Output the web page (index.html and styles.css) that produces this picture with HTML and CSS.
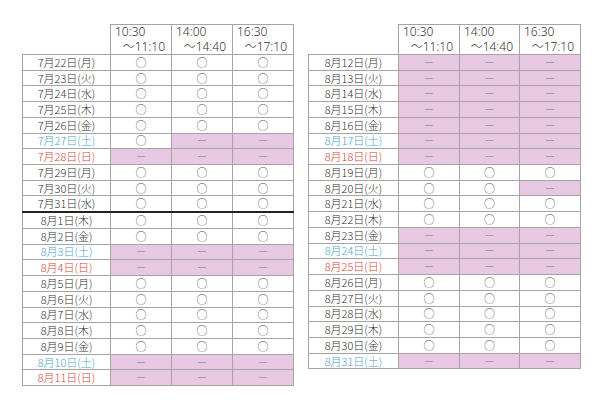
FILE: index.html
```html
<!DOCTYPE html>
<html lang="ja">
<head>
<meta charset="utf-8">
<link rel="stylesheet" href="styles.css">
</head>
<body>
<div class="page">
<table class="sched left">
<colgroup><col class="c-date"><col class="c-t"><col class="c-t"><col class="c-t"></colgroup>
<tr class="head"><th class="corner"></th><th><span class="l1">10:30</span><span class="l2">～11:10</span></th><th><span class="l1">14:00</span><span class="l2">～14:40</span></th><th><span class="l1">16:30</span><span class="l2">～17:10</span></th></tr>
<tr><td class="d">7月22日(月)</td><td>○</td><td>○</td><td>○</td></tr>
<tr><td class="d">7月23日(火)</td><td>○</td><td>○</td><td>○</td></tr>
<tr><td class="d">7月24日(水)</td><td>○</td><td>○</td><td>○</td></tr>
<tr><td class="d">7月25日(木)</td><td>○</td><td>○</td><td>○</td></tr>
<tr><td class="d">7月26日(金)</td><td>○</td><td>○</td><td>○</td></tr>
<tr><td class="d sat">7月27日(土)</td><td>○</td><td class="no">－</td><td class="no">－</td></tr>
<tr><td class="d sun">7月28日(日)</td><td class="no">－</td><td class="no">－</td><td class="no">－</td></tr>
<tr><td class="d">7月29日(月)</td><td>○</td><td>○</td><td>○</td></tr>
<tr><td class="d">7月30日(火)</td><td>○</td><td>○</td><td>○</td></tr>
<tr><td class="d">7月31日(水)</td><td>○</td><td>○</td><td>○</td></tr>
<tr class="split"><td class="d">8月1日(木)</td><td>○</td><td>○</td><td>○</td></tr>
<tr><td class="d">8月2日(金)</td><td>○</td><td>○</td><td>○</td></tr>
<tr><td class="d sat">8月3日(土)</td><td class="no">－</td><td class="no">－</td><td class="no">－</td></tr>
<tr><td class="d sun">8月4日(日)</td><td class="no">－</td><td class="no">－</td><td class="no">－</td></tr>
<tr><td class="d">8月5日(月)</td><td>○</td><td>○</td><td>○</td></tr>
<tr><td class="d">8月6日(火)</td><td>○</td><td>○</td><td>○</td></tr>
<tr><td class="d">8月7日(水)</td><td>○</td><td>○</td><td>○</td></tr>
<tr><td class="d">8月8日(木)</td><td>○</td><td>○</td><td>○</td></tr>
<tr><td class="d">8月9日(金)</td><td>○</td><td>○</td><td>○</td></tr>
<tr><td class="d sat">8月10日(土)</td><td class="no">－</td><td class="no">－</td><td class="no">－</td></tr>
<tr><td class="d sun">8月11日(日)</td><td class="no">－</td><td class="no">－</td><td class="no">－</td></tr>
</table>

<table class="sched right">
<colgroup><col class="c-date2"><col class="c-t"><col class="c-t2"><col class="c-t"></colgroup>
<tr class="head"><th class="corner"></th><th><span class="l1">10:30</span><span class="l2">～11:10</span></th><th><span class="l1">14:00</span><span class="l2">～14:40</span></th><th><span class="l1">16:30</span><span class="l2">～17:10</span></th></tr>
<tr><td class="d">8月12日(月)</td><td class="no">－</td><td class="no">－</td><td class="no">－</td></tr>
<tr><td class="d">8月13日(火)</td><td class="no">－</td><td class="no">－</td><td class="no">－</td></tr>
<tr><td class="d">8月14日(水)</td><td class="no">－</td><td class="no">－</td><td class="no">－</td></tr>
<tr><td class="d">8月15日(木)</td><td class="no">－</td><td class="no">－</td><td class="no">－</td></tr>
<tr><td class="d">8月16日(金)</td><td class="no">－</td><td class="no">－</td><td class="no">－</td></tr>
<tr><td class="d sat">8月17日(土)</td><td class="no">－</td><td class="no">－</td><td class="no">－</td></tr>
<tr><td class="d sun">8月18日(日)</td><td class="no">－</td><td class="no">－</td><td class="no">－</td></tr>
<tr><td class="d">8月19日(月)</td><td>○</td><td>○</td><td>○</td></tr>
<tr><td class="d">8月20日(火)</td><td>○</td><td>○</td><td class="no">－</td></tr>
<tr><td class="d">8月21日(水)</td><td>○</td><td>○</td><td>○</td></tr>
<tr><td class="d">8月22日(木)</td><td>○</td><td>○</td><td>○</td></tr>
<tr><td class="d">8月23日(金)</td><td class="no">－</td><td class="no">－</td><td class="no">－</td></tr>
<tr><td class="d sat">8月24日(土)</td><td class="no">－</td><td class="no">－</td><td class="no">－</td></tr>
<tr><td class="d sun">8月25日(日)</td><td class="no">－</td><td class="no">－</td><td class="no">－</td></tr>
<tr><td class="d">8月26日(月)</td><td>○</td><td>○</td><td>○</td></tr>
<tr><td class="d">8月27日(火)</td><td>○</td><td>○</td><td>○</td></tr>
<tr><td class="d">8月28日(水)</td><td>○</td><td>○</td><td>○</td></tr>
<tr><td class="d">8月29日(木)</td><td>○</td><td>○</td><td>○</td></tr>
<tr><td class="d">8月30日(金)</td><td>○</td><td>○</td><td>○</td></tr>
<tr><td class="d sat">8月31日(土)</td><td class="no">－</td><td class="no">－</td><td class="no">－</td></tr>
</table>
</div>
</body>
</html>
```

FILE: styles.css
```css
html, body {
  margin: 0;
  padding: 0;
  background: #ffffff;
}
body {
  font-family: "Noto Sans CJK JP", "Noto Sans", sans-serif;
  color: #333333;
}
.page {
  display: flex;
  align-items: flex-start;
  padding: 24px 0 0 22px;
  gap: 14px;
}
.sched {
  border-collapse: collapse;
  table-layout: fixed;
}
.sched.left { width: 271px; }
.sched.right { width: 272px; }
.c-date { width: 88px; }
.c-date2 { width: 90px; }
.c-t { width: 61px; }
.c-t2 { width: 60px; }
.sched th,
.sched td {
  border: 1px solid #a4a4a4;
  padding: 0;
  overflow: hidden;
}
.sched th.corner {
  border: none;
}
.head th {
  height: 29px;
  font-weight: 300;
  font-size: 12px;
  line-height: 14px;
  color: #333;
  vertical-align: middle;
  font-family: "Noto Sans", "Noto Sans CJK JP", sans-serif;
}
.head .l1 {
  display: block;
  height: 14px;
  text-align: left;
  padding-left: 4px;
  font-size: 12px;
}
.head .l2 {
  display: block;
  height: 14px;
  margin-top: 1px;
  text-align: right;
  padding-right: 6px;
  font-size: 12px;
}
.sched td {
  height: 14.72px;
  font-size: 11px;
  line-height: 13px;
  text-align: center;
  font-weight: 300;
  color: #555;
}
.sched td.d {
  color: #333;
  font-weight: 300;
}
.sched td.sat { color: #4aa5cc; }
.sched td.sun { color: #d8453c; }
.sched td.no {
  background: #e8c8e2;
  color: #777;
}
.split td {
  border-top: 2px solid #222;
}
```
